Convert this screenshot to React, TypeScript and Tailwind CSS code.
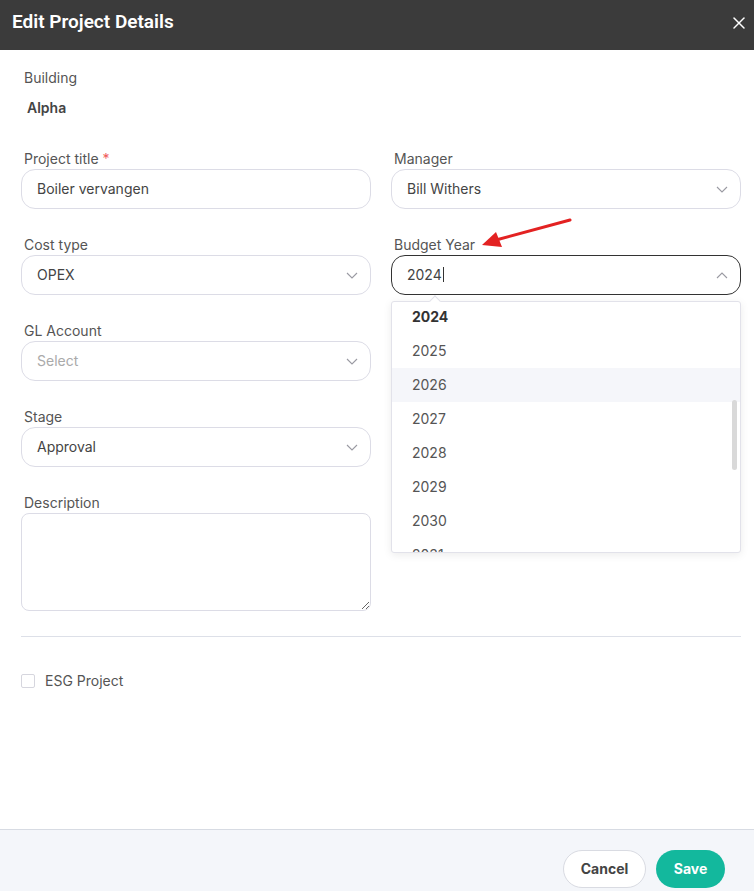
import { X } from 'lucide-react';

function Chevron({ up = false }: { up?: boolean }) {
  return (
    <svg width="12" height="7" viewBox="0 0 12 7" fill="none" className="text-[#9a9aa2]">
      <path d={up ? 'M1 6L6 1l5 5' : 'M1 1l5 5 5-5'} stroke="currentColor" strokeWidth="1.1" />
    </svg>
  );
}

function Label({ children }: { children: React.ReactNode }) {
  return <div className="h-5 pl-[3px] text-sm leading-5 text-[#555]">{children}</div>;
}

function SelectBox({ value, placeholder }: { value?: string; placeholder?: string }) {
  return (
    <div className="flex h-10 items-center justify-between rounded-[14px] border border-[#dcdce6] bg-white pl-[15px] pr-[12px] text-sm">
      {value ? <span className="text-[#444]">{value}</span> : <span className="text-[#aaa]">{placeholder}</span>}
      <Chevron />
    </div>
  );
}

const years = ['2024', '2025', '2026', '2027', '2028', '2029', '2030', '2031'];

export default function App() {
  return (
    <div className="flex h-[891px] w-[754px] flex-col bg-white" style={{ fontFamily: 'Inter, "Noto Sans", sans-serif' }}>
      {/* Header */}
      <div className="flex h-[50px] shrink-0 items-center justify-between bg-[#3b3b3b] pb-[5px] pl-3 pr-[5px]">
        <h1 className="text-[19px] font-semibold text-white" style={{ fontFamily: 'Roboto, sans-serif' }}>
          Edit Project Details
        </h1>
        <X size={20} strokeWidth={1.8} className="text-white" />
      </div>

      {/* Body */}
      <div className="flex-1 pl-[21px] pr-[13px] pt-[18px]">
        <div className="h-5 pl-[3px] text-sm leading-5 text-[#555]">Building</div>
        <div className="mt-[10px] h-5 pl-[6px] text-sm font-semibold leading-5 text-[#444]">Alpha</div>

        <div className="mt-[31px] grid grid-cols-2 gap-x-5">
          {/* Left column */}
          <div className="flex flex-col">
            <Label>
              Project title <span className="text-[#f05a5a]">*</span>
            </Label>
            <div className="flex h-10 items-center rounded-[14px] border border-[#dcdce6] pl-[15px] text-sm text-[#444]">
              Boiler vervangen
            </div>

            <div className="mt-[26px]">
              <Label>Cost type</Label>
              <SelectBox value="OPEX" />
            </div>
            <div className="mt-[26px]">
              <Label>GL Account</Label>
              <SelectBox placeholder="Select" />
            </div>
            <div className="mt-[26px]">
              <Label>Stage</Label>
              <SelectBox value="Approval" />
            </div>
            <div className="mt-[26px]">
              <Label>Description</Label>
              <textarea className="block h-[98px] w-full rounded-[8px] border border-[#dcdce6] outline-none" />
            </div>
          </div>

          {/* Right column */}
          <div className="flex flex-col">
            <Label>Manager</Label>
            <SelectBox value="Bill Withers" />

            <div className="relative mt-[26px]">
              <Label>Budget Year</Label>
              <div className="flex h-10 items-center justify-between rounded-[14px] border border-[#333] pl-[15px] pr-[12px] text-sm text-[#444]">
                <span>
                  2024<span className="ml-[1px] inline-block h-[15px] w-px translate-y-[2px] bg-[#333]" />
                </span>
                <Chevron up />
              </div>

              {/* Dropdown */}
              <div className="absolute left-0 right-0 top-[66px] z-10 h-[252px] overflow-hidden rounded-[3px] border border-[#e2e2ea] bg-white shadow-[0_2px_8px_rgba(0,0,0,0.08)]">
                <div className="-mt-[2px]">
                  {years.map((y, i) => (
                    <div
                      key={y}
                      className={
                        'flex h-[34px] items-center pl-5 text-sm ' +
                        (i === 0 ? 'font-bold text-[#333] ' : 'text-[#555] ') +
                        (i === 2 ? 'bg-[#f5f6fa]' : '')
                      }
                    >
                      {y}
                    </div>
                  ))}
                </div>
                <div className="absolute right-[3px] top-[98px] h-[70px] w-[5px] rounded-full bg-[#d9d9d9]" />
              </div>
              <div className="absolute left-[40px] top-[62px] z-20 h-2 w-2 rotate-45 border-l border-t border-[#e2e2ea] bg-white" />
            </div>
          </div>
        </div>

        <div className="mt-[25px] h-px bg-[#dde0e8]" />

        <label className="mt-[34px] flex items-center gap-[10px] text-sm text-[#555]">
          <span className="h-[14px] w-[14px] rounded-[2px] border border-[#d6d6de] bg-white" />
          ESG Project
        </label>
      </div>

      {/* Footer */}
      <div className="flex h-[62px] shrink-0 items-start justify-end gap-[10px] border-t border-[#d7dbe3] bg-[#f4f6fa] pr-[29px] pt-[20px]">
        <button className="h-[38px] w-[83px] rounded-full border border-[#d9dbe2] bg-white text-sm font-bold text-[#444]">
          Cancel
        </button>
        <button className="h-[38px] w-[69px] rounded-full bg-[#13b89d] text-sm font-bold text-white">Save</button>
      </div>

      {/* Annotation arrow */}
      <svg className="pointer-events-none absolute left-[478px] top-[214px]" width="100" height="40" viewBox="0 0 100 40">
        <line x1="92" y1="6" x2="18" y2="26" stroke="#e32222" strokeWidth="3" strokeLinecap="round" />
        <polygon points="4,31 18,18 24,33" fill="#e32222" />
      </svg>
    </div>
  );
}
